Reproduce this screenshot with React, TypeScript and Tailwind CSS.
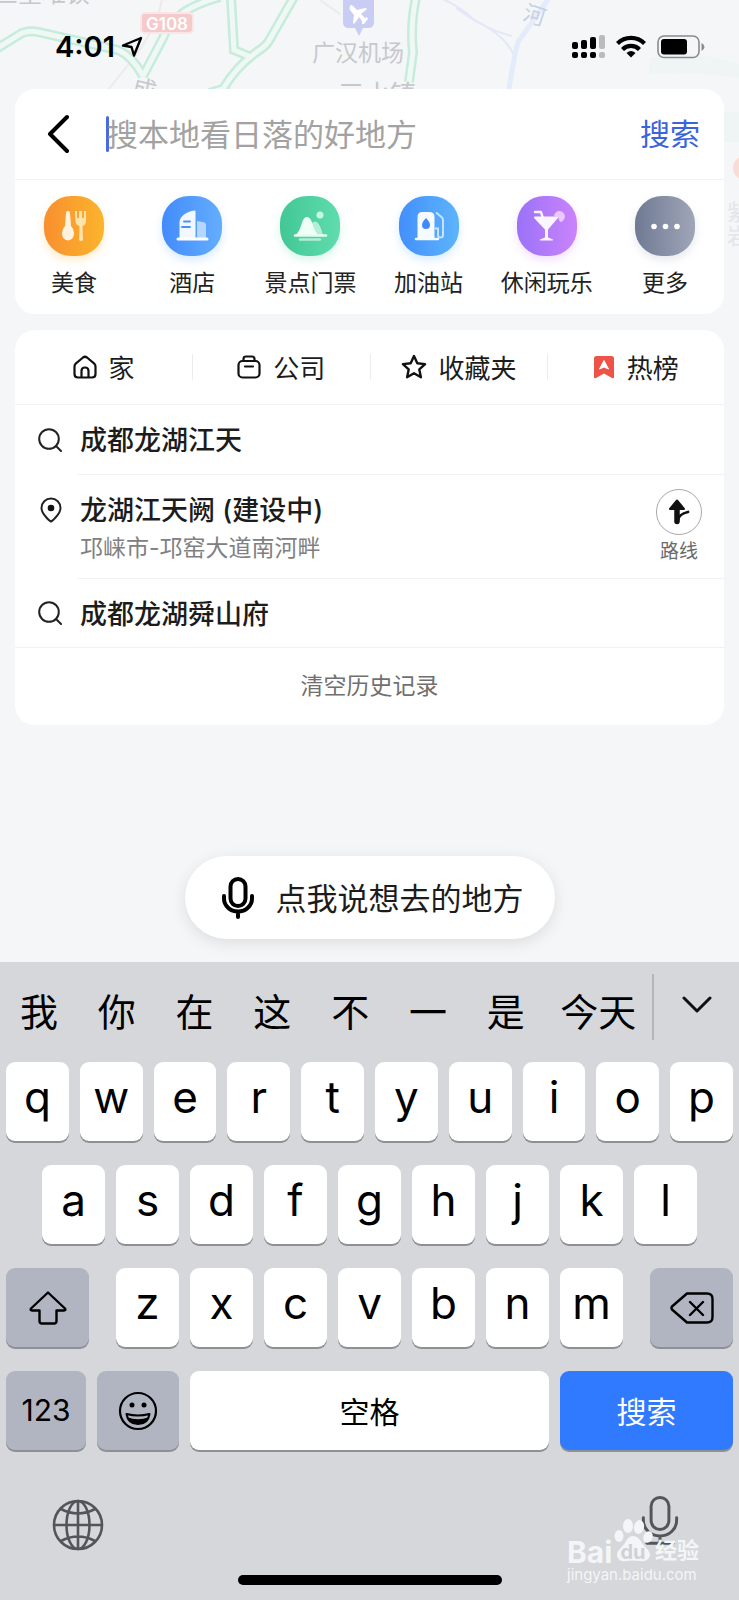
import type { ReactNode } from "react";
import { clsx } from "clsx";

const CATEGORIES = [
  { title: "美食", icon: <FoodIcon />, color: "from-[#f88f2f] to-[#fbb42c] shadow-[#fbb42c]/25" },
  { title: "酒店", icon: <HotelIcon />, color: "from-[#438bfb] to-[#64adfd] shadow-[#64adfd]/25" },
  { title: "景点门票", icon: <SceneryIcon />, color: "from-[#42c795] to-[#5fdcae] shadow-[#5fdcae]/25" },
  { title: "加油站", icon: <FuelIcon />, color: "from-[#438ffb] to-[#5eb4fb] shadow-[#5eb4fb]/25" },
  { title: "休闲玩乐", icon: <CocktailIcon />, color: "from-[#9a72f8] to-[#cb83fb] shadow-[#cb83fb]/25" },
  { title: "更多", icon: <MoreIcon />, color: "from-[#6f7a93] to-[#a0a6b8] shadow-[#a0a6b8]/25" },
];

const TABS = [
  { title: "家", icon: <HomeIcon /> },
  { title: "公司", icon: <CompanyIcon /> },
  { title: "收藏夹", icon: <StarIcon /> },
  { title: "热榜", icon: <HotIcon /> },
];

const CANDIDATES = ["我", "你", "在", "这", "不", "一", "是", "今天"];

function FoodIcon() {
  return (
    <svg width="60" height="60" viewBox="0 0 60 60" aria-hidden="true">
      <path d="M22 17q0-2 2-2t2 2l1 13q3 3 3 7 0 7-6 7.500-6-.5-6-7.500 0-4 3-7z" fill="#fff3df" />
      <path d="M31 15h2v7h2v-7h3v7h2v-7h2v10q0 4-3.500 5l.5 14q-2 2-4 0l.5-14q-4-1-4-5z" fill="#ffe3ad" />
    </svg>
  );
}

function HotelIcon() {
  return (
    <svg width="60" height="60" viewBox="0 0 60 60" aria-hidden="true">
      <path d="M35 25l6 1q3 .5 3 3v13h-9z" fill="#b4d6ff" />
      <path d="M17.500 42V27q0-5 4-8 5-4 11-4.500 1 0 1 1V42z" fill="#f2f8ff" />
      <path d="M22 25.500h6M20 31h8" stroke="#4a92fb" strokeWidth="2" strokeLinecap="round" />
      <path d="M16 43h29" stroke="#fff" strokeWidth="3" strokeLinecap="round" />
    </svg>
  );
}

function SceneryIcon() {
  return (
    <svg width="60" height="60" viewBox="0 0 60 60" aria-hidden="true">
      <path d="M32 27q3-3 6 0 3 4 5 12H30z" fill="#b5eed7" />
      <path d="M16 39q3-3 5-9 2-9 6-9t6 9q2 6 5 9z" fill="#f0fff8" />
      <circle cx="40" cy="19" r="3.500" fill="#c9f6e3" />
      <path d="M15 39.500h31" stroke="#e6fcf2" strokeWidth="2.500" strokeLinecap="round" />
      <path d="M20 43.500h20" stroke="#b5eed7" strokeWidth="2.500" strokeLinecap="round" />
    </svg>
  );
}

function FuelIcon() {
  return (
    <svg width="60" height="60" viewBox="0 0 60 60" aria-hidden="true">
      <path d="M37 16.500l6 5q1 1 1 3v15q0 2-2.500 2t-2.500-2v-7h-3" fill="none" stroke="#c5e3ff" strokeWidth="2" />
      <path d="M18.500 43V21q0-5 5-5h7q5 0 5 5v22z" fill="#f6fbff" />
      <path d="M27 22q4 4 4 7a4 4 0 0 1-8 0q0-3 4-7z" fill="#3f8af8" />
      <path d="M17 43h22" stroke="#f6fbff" strokeWidth="2.500" strokeLinecap="round" />
    </svg>
  );
}

function CocktailIcon() {
  return (
    <svg width="60" height="60" viewBox="0 0 60 60" aria-hidden="true">
      <path d="M37 20a5.500 5.500 0 1 1 6 6l-2-5z" fill="#ebc8ff" />
      <path d="M18 16h6l1.500 5" fill="none" stroke="#fbf5ff" strokeWidth="2.500" strokeLinecap="round" strokeLinejoin="round" />
      <path d="M18 20.500h22q2 0 .5 2L31 33.500v8l5 2q1 1-1 1H24q-2 0-1-1l5-2v-8l-10.500-11q-1.500-2 .5-2z" fill="#fbf5ff" />
    </svg>
  );
}

function MoreIcon() {
  return (
    <svg width="60" height="60" viewBox="0 0 60 60" fill="#fff" aria-hidden="true">
      <circle cx="19" cy="30.500" r="2.800" />
      <circle cx="30.500" cy="30.500" r="2.800" />
      <circle cx="42" cy="30.500" r="2.800" />
    </svg>
  );
}

function HomeIcon() {
  return (
    <svg width="24" height="24" viewBox="0 0 24 24" fill="none" stroke="#111" strokeWidth="2.200" strokeLinejoin="round" aria-hidden="true">
      <path d="M1.500 11.500q0-2 1.500-3.200l7-5.800q2-1.500 4 0l7 5.800q1.500 1.200 1.500 3.200V19q0 3.500-3.500 3.500H5Q1.500 22.500 1.500 19z" />
      <path d="M8.500 22v-6q0-3.500 3.500-3.500t3.500 3.500v6" />
    </svg>
  );
}

function CompanyIcon() {
  return (
    <svg width="24" height="24" viewBox="0 0 24 24" fill="none" stroke="#111" strokeWidth="2.200" strokeLinecap="round" aria-hidden="true">
      <rect x="1.500" y="6" width="21" height="16.500" rx="4" />
      <path d="M6.500 5.500V4q0-2.500 2.500-2.500h6q2.500 0 2.500 2.500v1.500M8 11.500h8" />
    </svg>
  );
}

function StarIcon() {
  return (
    <svg width="26" height="26" viewBox="0 0 26 26" fill="none" stroke="#111" strokeWidth="2.400" strokeLinejoin="round" aria-hidden="true">
      <path d="M13 2l3.300 7.200 7.800.9-5.800 5.300 1.600 7.800L13 19.300l-6.900 3.900 1.600-7.800L1.900 10.100l7.800-.9z" />
    </svg>
  );
}

function HotIcon() {
  return (
    <svg width="22" height="24" viewBox="0 0 22 24" aria-hidden="true">
      <path d="M1 3.500Q1 1 3.500 1h15Q21 1 21 3.500V22q0 2-2 1l-8-4.500L3 23q-2 1-2-1z" fill="#ee5347" />
      <path d="M11 5.500l4.500 8.500L11 12l-4.500 2z" fill="#fff" stroke="#fff" strokeLinejoin="round" />
    </svg>
  );
}

function SearchIcon() {
  return (
    <svg width="24" height="24" viewBox="0 0 24 24" fill="none" stroke="#222" strokeWidth="2" strokeLinecap="round" aria-hidden="true">
      <circle cx="11" cy="11" r="9.800" />
      <path d="M18 18l5 5" />
    </svg>
  );
}

function PinIcon() {
  return (
    <svg width="24" height="26" viewBox="0 0 24 26" aria-hidden="true">
      <path
        d="M12 24.500Q10.500 24 7 20 2.500 15 2.500 11a9.500 9.500 0 0 1 19 0q0 4-4.500 9-3.500 4-5 4.500z"
        fill="none"
        stroke="#222"
        strokeWidth="2"
      />
      <circle cx="12" cy="11" r="3.300" fill="#111" />
    </svg>
  );
}

function MicIcon({ className, base }: { className: string; base?: boolean }) {
  return (
    <svg viewBox="0 0 32 42" className={className} fill="none" stroke="currentColor" strokeLinecap="round" aria-hidden="true">
      <rect x="8.500" y="2" width="15" height="27" rx="7.500" />
      <path d="M2 19v2.500a14 13 0 0 0 28 0V19M16 35v5" />
      {base && <path d="M5 40.500h22" />}
    </svg>
  );
}

function MapBackdrop() {
  const roads = [
    "M-4 49L22 33q8-3 16-1l80 18q14 6 25 26",
    "M220-3q-22 6-36 15-16 12-22 28l-19 36",
    "M231-3l3 53 17 7",
    "M294-3l-24 42q-3 6-9 10-24 16-38 40l-14 4",
    "M416-3q-6 30-3 55l-4 30",
  ];

  return (
    <svg
      viewBox="0 0 739 330"
      preserveAspectRatio="xMidYMin slice"
      className="absolute inset-x-0 top-0 w-full font-[Inter,'Noto_Sans_CJK_SC',sans-serif]"
      fill="none"
      aria-hidden="true"
    >
      <path d="M650 58q40-10 89 6v14q-50-8-90-4zM724 112h15v30h-15z" fill="#eff5f4" />
      <path d="M162 0q-6 30-30 60t-24 30M320 0l20 14" stroke="#f0e9ec" strokeWidth="2" />
      {roads.map((d) => (
        <path key={d} d={d} stroke="#c6ecdb" strokeWidth="10" />
      ))}
      {roads.map((d) => (
        <path key={d} d={d} stroke="#f0f8f5" strokeWidth="5" />
      ))}
      <path d="M440-2q20 8 34 22 30 14 40 35l-6 34M456 8q30 22 56 28" stroke="#e2e8f8" strokeWidth="2" />
      <path d="M549-2l-31 44q-4 14-9 47" stroke="#e4ebfa" strokeWidth="5" />
      <rect x="141" y="13" width="52" height="20" rx="4" fill="#f5caca" stroke="#fae6e6" strokeWidth="2" />
      <text x="167" y="30" textAnchor="middle" fontSize="17" fontWeight="600" fill="#fff">
        G108
      </text>
      <path d="M343-4h31v26q0 6-6 6h-5l-4 8-4-8h-6q-6 0-6-6z" fill="#c9cdf3" />
      <path
        d="M350 6q1-2 3 0l4 4 8-2q3 0 1 2l-5 4 4 4 2-1 1 2-4 5-2 0 0-3-3-4-4 6q-2 2-2-1l1-7-4-5q-1-2 0-4z"
        fill="#fff"
      />
      <g fill="#c6c8cc">
        <text x="312" y="61" fontSize="23">广汉机场</text>
        <text x="338" y="104" fontSize="26">三水镇</text>
        <text x="-6" y="2" fontSize="24">三星堆镇</text>
        <text x="132" y="98" fontSize="24" transform="rotate(14 144 90)">成</text>
        <text x="524" y="23" fontSize="22" fill="#c5d0e6" transform="rotate(18 535 14)">河</text>
      </g>
      <circle cx="745" cy="168" r="12" fill="#f9ddd5" />
      <text x="727" y="220" fontSize="22" fill="#e3e5e9">紫</text>
      <text x="727" y="244" fontSize="22" fill="#e3e5e9">岩</text>
    </svg>
  );
}

function StatusBar() {
  return (
    <header className="relative flex h-[89px] items-center justify-between pt-1 pr-[34px] pl-[55px]">
      <div className="flex items-center gap-[6px]">
        <span className="text-[29px] font-semibold">4:01</span>
        <svg width="22" height="22" viewBox="0 0 22 22" fill="none" stroke="#000" strokeWidth="2.400" strokeLinejoin="round" aria-hidden="true">
          <path d="M20 2L2 9.500l8.500 1.500 2.500 8.500z" />
        </svg>
      </div>
      <div className="flex items-center gap-[11px]">
        <svg width="33" height="24" viewBox="0 0 33 24" aria-hidden="true">
          <rect x="0" y="7" width="6" height="7" rx="2" />
          <rect x="9" y="5" width="6" height="9" rx="2" />
          <rect x="18" y="2" width="6" height="12" rx="2" />
          <rect x="27" y="0" width="6" height="14" rx="2" fill="#bbb" />
          <rect x="0" y="17" width="6" height="6" rx="2" />
          <rect x="9" y="17" width="6" height="6" rx="2" />
          <rect x="18" y="17" width="6" height="6" rx="2" />
          <rect x="27" y="17" width="6" height="6" rx="2" fill="#bbb" />
        </svg>
        <svg width="30" height="23" viewBox="0 0 30 23" fill="none" stroke="#000" strokeWidth="4.200" aria-hidden="true">
          <path d="M1.500 8.500a19 19 0 0 1 27 0M6.500 14.500a12 12 0 0 1 17 0" />
          <path d="M15 22.500l-4.500-4.600q4.500-3.600 9 0z" fill="#000" stroke="none" />
        </svg>
        <svg width="48" height="24" viewBox="0 0 48 24" aria-hidden="true">
          <rect x="1" y="1" width="41" height="21.500" rx="6" fill="none" stroke="#8b8b8d" strokeWidth="1.600" />
          <rect x="4" y="4" width="26" height="15.500" rx="3" />
          <path d="M44.500 8q3 1.500 3 4t-3 4z" fill="#8b8b8d" />
        </svg>
      </div>
    </header>
  );
}

function SearchCard() {
  return (
    <section className="relative mx-[15px] rounded-[20px] bg-white pb-3">
      <form className="flex h-[91px] items-center border-b border-[#f1f2f3] pr-6 pl-8">
        <button type="button" aria-label="返回">
          <svg width="22" height="40" viewBox="0 0 22 40" fill="none" stroke="#000" strokeWidth="4" strokeLinecap="round" strokeLinejoin="round" aria-hidden="true">
            <path d="M20 3L3 20l17 17" />
          </svg>
        </button>
        <span className="ml-[37px] h-9 w-[3px] shrink-0 rounded-sm bg-[#4a6be0]" />
        <input
          type="text"
          aria-label="搜索地点"
          placeholder="搜本地看日落的好地方"
          className="-ml-0.5 min-w-0 flex-1 bg-transparent pt-0.5 text-[31px] outline-none placeholder:text-[#a2a2a2]"
        />
        <button type="submit" className="text-[30px] text-[#3a63dc]">
          搜索
        </button>
      </form>
      <nav aria-label="分类" className="grid grid-cols-6 pt-4">
        {CATEGORIES.map((item) => (
          <button key={item.title} type="button" className="flex flex-col items-center gap-2">
            <span className={clsx("size-[60px] rounded-[27px] bg-linear-to-r shadow-[0_4px_8px]", item.color)}>
              {item.icon}
            </span>
            <span className="text-[23px] leading-[38px] whitespace-nowrap text-[#222]">{item.title}</span>
          </button>
        ))}
      </nav>
    </section>
  );
}

function HistoryRow({ title, icon, first }: { title: string; icon: ReactNode; first?: boolean }) {
  return (
    <li className="flex items-center pl-[23px]">
      <span className="w-[39px]">{icon}</span>
      <button
        type="button"
        className={clsx(
          "h-[69px] flex-1 pt-1 pl-[3px] text-left text-[27px] font-medium text-[#1c1c1c]",
          !first && "border-t border-[#f1f2f3]",
        )}
      >
        {title}
      </button>
    </li>
  );
}

function HistoryCard() {
  return (
    <section className="relative mx-[15px] mt-4 rounded-[20px] bg-white">
      <nav aria-label="快捷入口" className="grid h-[75px] grid-cols-4 items-center border-b border-[#f1f2f3]">
        {TABS.map((tab, i) => (
          <button
            key={tab.title}
            type="button"
            className={clsx(
              "flex h-[26px] items-center justify-center gap-3 text-[26px] leading-none text-[#1c1c1c]",
              i > 0 && "border-l border-[#ebecee]",
            )}
          >
            {tab.icon}
            <span className="pt-1">{tab.title}</span>
          </button>
        ))}
      </nav>
      <ul>
        <HistoryRow title="成都龙湖江天" icon={<SearchIcon />} first />
        <li className="flex pl-6">
          <span className="w-[38px] pt-[23px]">
            <PinIcon />
          </span>
          <div className="flex h-[104px] flex-1 justify-between border-t border-[#f1f2f3] pr-[22px] pl-[3px]">
            <button type="button" className="flex flex-col items-start pt-4 text-left">
              <span className="text-[27px] leading-10 font-medium text-[#1c1c1c]">龙湖江天阙 (建设中)</span>
              <span className="text-[23px] leading-[34px] text-[#808080]">邛崃市-邛窑大道南河畔</span>
            </button>
            <button type="button" className="flex flex-col items-center gap-1 pt-[14px]">
              <span className="flex size-[46px] items-center justify-center rounded-full border border-[#a8a8a8]">
                <svg width="22" height="26" viewBox="0 0 22 26" aria-hidden="true">
                  <path d="M9 1.500L2 10h14z" fill="#111" stroke="#111" strokeWidth="2" strokeLinejoin="round" />
                  <path d="M9 8v14.500" stroke="#111" strokeWidth="5.500" strokeLinecap="round" />
                  <path d="M10 21q1-6 10-8" fill="none" stroke="#111" strokeWidth="2.800" strokeLinecap="round" />
                </svg>
              </span>
              <span className="text-[19px] leading-[26px] text-[#6b6b6b]">路线</span>
            </button>
          </div>
        </li>
        <HistoryRow title="成都龙湖舜山府" icon={<SearchIcon />} />
      </ul>
      <button type="button" className="h-[78px] w-full border-t border-[#f1f2f3] text-[23px] text-[#707070]">
        清空历史记录
      </button>
    </section>
  );
}

function Key({ children, label, className }: { children: ReactNode; label?: string; className?: string }) {
  return (
    <button
      type="button"
      aria-label={label}
      className={clsx(
        "flex h-[79px] items-center justify-center rounded-[9px] shadow-[0_2px_0_#8e9095]",
        className,
      )}
    >
      {children}
    </button>
  );
}

function Letters({ keys }: { keys: string }) {
  return keys.split("").map((key) => (
    <Key key={key} className="min-w-0 flex-1 bg-white pb-[10px] text-[44px]">
      {key}
    </Key>
  ));
}

function Keyboard() {
  return (
    <section aria-label="键盘" className="relative bg-[#d5d7db]">
      <div className="flex h-[100px]">
        <div className="grid flex-1 grid-cols-[repeat(7,29fr)_40fr]">
          {CANDIDATES.map((word) => (
            <button key={word} type="button" className="text-[38px] whitespace-nowrap">
              {word}
            </button>
          ))}
        </div>
        <button
          type="button"
          aria-label="展开"
          className="mt-3 flex h-[66px] w-[87px] items-center justify-center border-l-2 border-[#b3b5ba] pb-1"
        >
          <svg width="30" height="18" viewBox="0 0 30 18" fill="none" stroke="#111" strokeWidth="3" strokeLinecap="round" strokeLinejoin="round" aria-hidden="true">
            <path d="M2 2l13 13L28 2" />
          </svg>
        </button>
      </div>

      <div className="flex flex-col gap-6 px-1.5">
        <div className="flex gap-[11px]">
          <Letters keys="qwertyuiop" />
        </div>
        <div className="flex gap-[11px] px-9">
          <Letters keys="asdfghjkl" />
        </div>
        <div className="flex">
          <Key label="大写" className="w-[83px] bg-[#b1b5c1]">
            <svg width="38" height="34" viewBox="0 0 38 34" fill="none" stroke="#000" strokeWidth="2.400" strokeLinejoin="round" aria-hidden="true">
              <path d="M19 1.500L2 17.500q-1 2 1 2h7.500V30q0 2.500 2.500 2.500h12q2.500 0 2.500-2.500V19.500H35q2 0 1-2z" />
            </svg>
          </Key>
          <div className="mx-[27px] flex flex-1 gap-[11px]">
            <Letters keys="zxcvbnm" />
          </div>
          <Key label="删除" className="w-[83px] bg-[#b1b5c1]">
            <svg width="44" height="32" viewBox="0 0 44 32" fill="none" stroke="#000" strokeWidth="2.400" strokeLinecap="round" strokeLinejoin="round" aria-hidden="true">
              <path d="M17 1.500h20q5.500 0 5.500 5.500v18q0 5.500-5.500 5.500H17L2 17.500q-1-1.500 0-3zM20 10l13 13M33 10L20 23" />
            </svg>
          </Key>
        </div>
        <div className="flex gap-[11px]">
          <Key className="w-20 bg-[#b1b5c1] text-[30px]">123</Key>
          <Key label="表情" className="w-[82px] bg-[#b1b5c1]">
            <svg width="40" height="40" viewBox="0 0 40 40" aria-hidden="true">
              <circle cx="20" cy="20" r="18" fill="none" stroke="#000" strokeWidth="2.200" />
              <circle cx="14" cy="14" r="2.500" />
              <circle cx="26" cy="14" r="2.500" />
              <path d="M8.500 23q11.500 3 23 0-1.500 10-11.500 10T8.500 23z" fill="none" stroke="#000" strokeWidth="2" strokeLinejoin="round" />
              <path d="M9 26q11 4.500 22 0-3 7-11 7T9 26z" />
            </svg>
          </Key>
          <Key className="flex-1 bg-white pt-1 text-[30px]">空格</Key>
          <Key className="w-[173px] bg-[#2f7afe] pt-1 text-[30px] text-white">搜索</Key>
        </div>
      </div>

      <div className="flex h-[125px] items-start justify-between pt-[43px] pr-[60px] pl-[52px]">
        <button type="button" aria-label="切换键盘">
          <svg width="52" height="52" viewBox="0 0 52 52" fill="none" stroke="#53555b" strokeWidth="2.600" aria-hidden="true" className="mt-1.5">
            <circle cx="26" cy="26" r="24" />
            <ellipse cx="26" cy="26" rx="11.500" ry="24" />
            <path d="M26 2v48M2 26h48M9 10q17 9 34 0M9 42q17-9 34 0" />
          </svg>
        </button>
        <button type="button" aria-label="语音输入" className="text-[#53555b]">
          <MicIcon className="h-[54px] w-[38px] stroke-[2.500]" base />
        </button>
      </div>
      <div className="mx-auto h-[10px] w-[264px] rounded-full bg-black" />
      <div className="h-[15px]" />

      <div className="absolute right-[40px] bottom-[15px] w-[132px] text-[#f4f5f7]">
        <div className="flex h-[52px] items-end justify-between">
          <span className="text-[30px] leading-[26px] font-bold">Bai</span>
          <svg width="40" height="46" viewBox="0 0 40 46" fill="currentColor" aria-hidden="true" className="mb-0.5">
            <ellipse cx="5" cy="19" rx="4.500" ry="6" />
            <ellipse cx="14" cy="9" rx="5" ry="7" />
            <ellipse cx="25" cy="10" rx="5" ry="7" transform="rotate(12 25 10)" />
            <ellipse cx="34" cy="20" rx="4.500" ry="6" transform="rotate(20 34 20)" />
            <path d="M19 19q5 0 9 7l6 7q4 5 0 9-3 3-8 2-7-1-14 0-6 1-8-3-3-5 2-9l5-6q3-7 8-7z" />
            <text x="19" y="42" textAnchor="middle" fontSize="20" fontWeight="700" fill="#cfd1d6">
              du
            </text>
          </svg>
          <span className="text-[22px] leading-[30px] font-bold">经验</span>
        </div>
        <div className="text-[15px] leading-[20px]">jingyan.baidu.com</div>
      </div>
    </section>
  );
}

export default function App() {
  return (
    <main className="relative overflow-hidden bg-[#f5f6f8] font-[Inter,'Noto_Sans_CJK_SC',sans-serif] text-black">
      <MapBackdrop />
      <StatusBar />
      <SearchCard />
      <HistoryCard />
      <div className="relative flex justify-center pt-[131px] pb-[23px]">
        <button
          type="button"
          className="flex h-[83px] w-[370px] items-center justify-center gap-[22px] rounded-full bg-white pl-1.5 text-[31px] text-[#1c1c1c] shadow-[0_4px_16px] shadow-black/10"
        >
          <MicIcon className="h-[42px] w-8 stroke-[4] text-black" />
          <span className="pt-1">点我说想去的地方</span>
        </button>
      </div>
      <Keyboard />
    </main>
  );
}
